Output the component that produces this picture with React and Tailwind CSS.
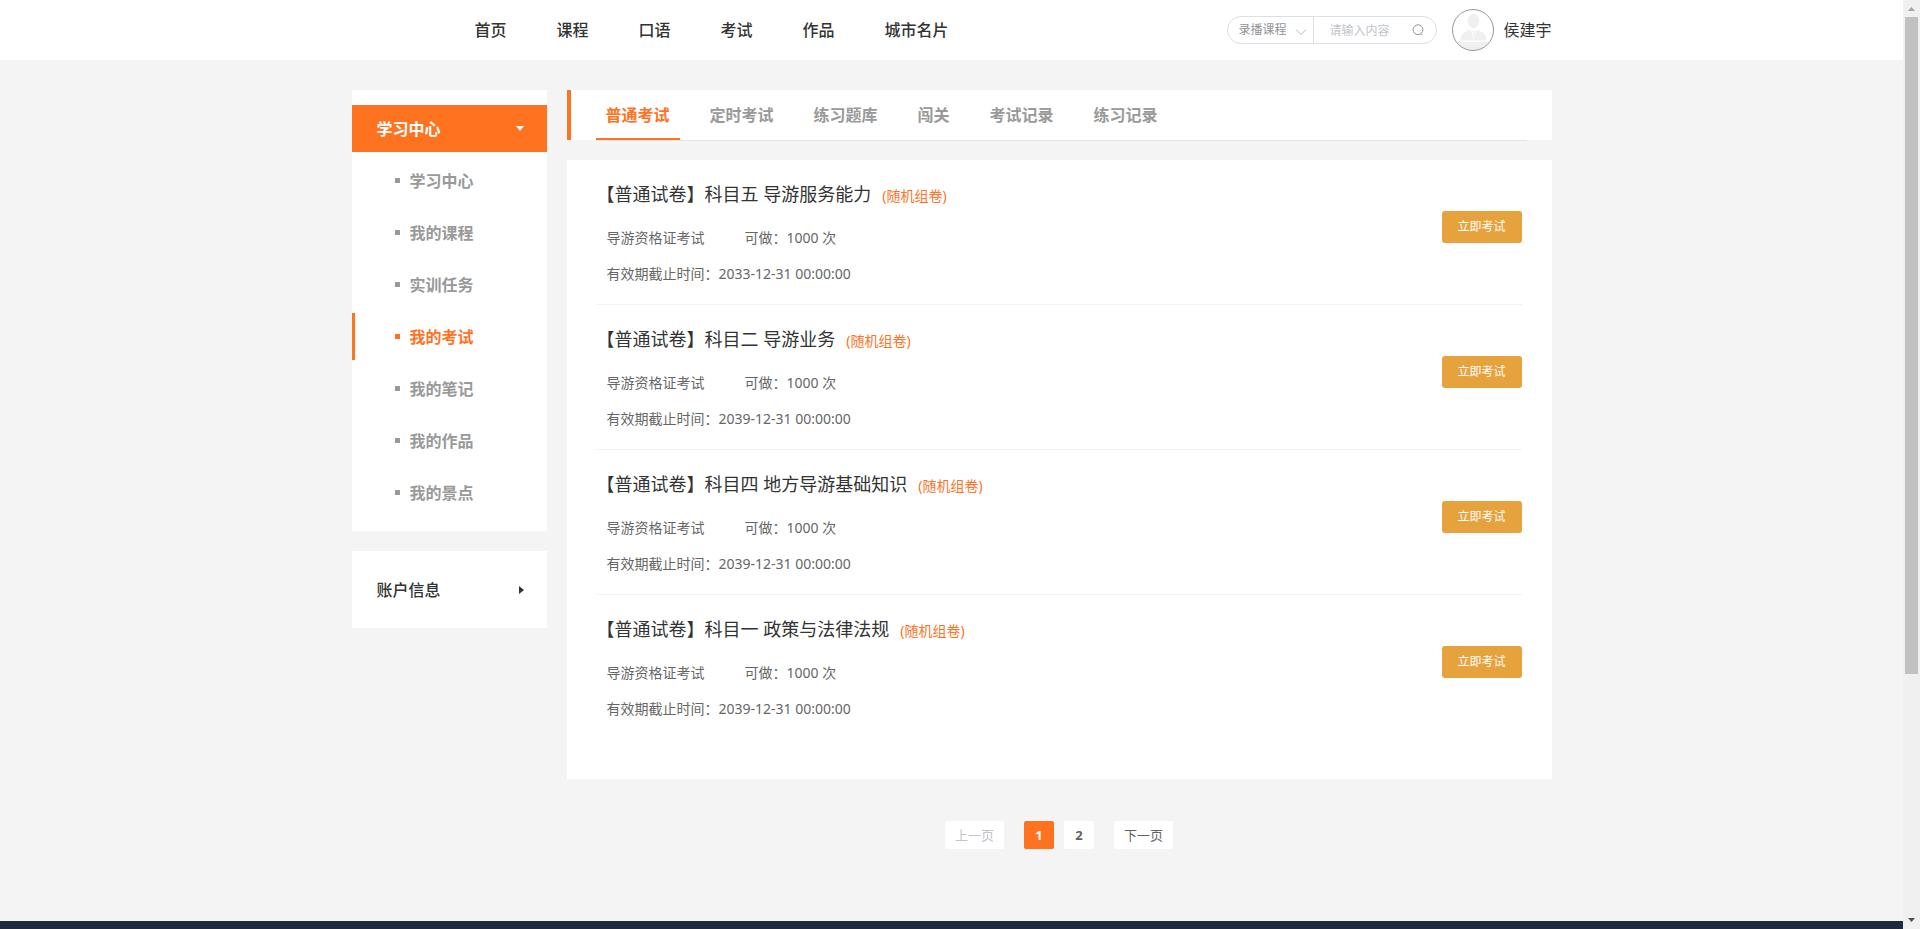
import React from 'react';

const navLinks = ['首页', '课程', '口语', '考试', '作品', '城市名片'];

const menuItems = ['学习中心', '我的课程', '实训任务', '我的考试', '我的笔记', '我的作品', '我的景点'];

const tabs = ['普通考试', '定时考试', '练习题库', '闯关', '考试记录', '练习记录'];

const exams = [
  { id: 1, title: '【普通试卷】科目五 导游服务能力', category: '导游资格证考试', times: 1000, deadline: '2033-12-31 00:00:00' },
  { id: 2, title: '【普通试卷】科目二 导游业务', category: '导游资格证考试', times: 1000, deadline: '2039-12-31 00:00:00' },
  { id: 3, title: '【普通试卷】科目四 地方导游基础知识', category: '导游资格证考试', times: 1000, deadline: '2039-12-31 00:00:00' },
  { id: 4, title: '【普通试卷】科目一 政策与法律法规', category: '导游资格证考试', times: 1000, deadline: '2039-12-31 00:00:00' }
];

const Header = () => (
  <header className="bg-white">
    <div className="max-w-[1200px] h-[60px] mx-auto flex items-center justify-between">
      <nav className="flex gap-[50px] pl-[123px] text-base font-medium text-[#333]">
        {navLinks.map((link) => (
          <a key={link} href="#">{link}</a>
        ))}
      </nav>

      <div className="flex items-center">
        {/* Search */}
        <form className="flex items-center w-[210px] h-7 border border-[#dcdfe6] rounded-full text-xs overflow-hidden">
          <div className="relative w-[86px] h-full border-r border-[#dcdfe6]">
            <select aria-label="课程类型" className="appearance-none w-full h-full pl-[10px] text-[#909399] bg-transparent outline-none">
              <option>录播课程</option>
            </select>
            <svg className="absolute right-[6px] top-[11px] w-3 h-2 pointer-events-none" viewBox="0 0 12 8" fill="none" stroke="#b4b8bf">
              <path d="M1 1.500l5 5 5-5" />
            </svg>
          </div>
          <input
            type="text"
            aria-label="搜索"
            placeholder="请输入内容"
            className="flex-1 min-w-0 h-full pl-[15px] outline-none placeholder:text-[#c0c4cc]"
          />
          <button type="submit" aria-label="搜索" className="mr-3">
            <svg className="w-3 h-3" viewBox="0 0 12 12" fill="none" stroke="#909399">
              <circle cx="6" cy="5.7" r="4.900" />
              <path d="M8.800 9.700l1.700 1.500" />
            </svg>
          </button>
        </form>

        {/* User */}
        <a href="#" className="flex items-center gap-[9px] ml-[15px] text-base text-[#333]">
          <svg className="w-[42px] h-[42px]" viewBox="0 0 42 42">
            <defs>
              <clipPath id="avatar">
                <circle cx="21" cy="21" r="20.5" />
              </clipPath>
            </defs>
            <circle cx="21" cy="21" r="20.5" fill="#fff" />
            <g clipPath="url(#avatar)" fill="#f0f0f0">
              <ellipse cx="21.5" cy="12" rx="5.7" ry="7.2" />
              <path d="M8.5 31.5c0-7 4-8.500 9.500-10.500l3.500 6 3.500-6c5.500 2 9.500 3.500 9.500 10.500z" />
              <path d="M20 21.500h3.500l-.7 2 1 4-2 3-2-3 1-4z" fill="#fff" />
              <path d="M20.300 22h2.700l-.7 1.500.8 4-1.400 2-1.400-2 .8-4z" />
              <rect y="33" width="42" height="9" />
            </g>
            <circle cx="21" cy="21" r="20.5" fill="none" stroke="#999" />
          </svg>
          侯建宇
        </a>
      </div>
    </div>
  </header>
);

const Sidebar = () => (
  <aside className="w-[195px] shrink-0 flex flex-col gap-5 text-base font-bold">
    <div className="bg-white py-[15px]">
      <button type="button" className="flex items-center justify-between w-full h-[47px] pl-[25px] pr-[23px] bg-[#ff721f] text-white font-bold">
        学习中心
        <svg className="w-2 h-[5px]" viewBox="0 0 8 5" fill="currentColor">
          <path d="M0 0h8l-4 5z" />
        </svg>
      </button>
      <ul className="flex flex-col gap-[5px] mt-[5px]">
        {menuItems.map((item) => (
          <li key={item}>
            <a
              href="#"
              className={
                item === '我的考试'
                  ? 'flex items-center gap-[10px] h-[47px] pl-10 border-l-3 border-[#ff721f] text-[#ff721f]'
                  : 'flex items-center gap-[10px] h-[47px] pl-10 border-l-3 border-transparent text-[#999]'
              }
            >
              <span className="w-[5px] h-[5px] bg-current"></span>
              {item}
            </a>
          </li>
        ))}
      </ul>
    </div>

    <div className="bg-white py-[15px]">
      <button type="button" className="flex items-center justify-between w-full h-[47px] pl-[25px] pr-[23px] text-[#333] font-medium">
        账户信息
        <svg className="w-[5px] h-2" viewBox="0 0 5 8" fill="currentColor">
          <path d="M0 0l5 4-5 4z" />
        </svg>
      </button>
    </div>
  </aside>
);

const ExamList = () => (
  <ul className="bg-white px-[30px] pb-[39px]">
    {exams.map((exam) => (
      <li key={exam.id} className="flex items-start justify-between border-b border-[#f2f2f2] last:border-transparent">
        <div className="pt-2 pb-3 text-sm text-[#666]">
          <div className="flex items-baseline gap-[11px] h-[52px]">
            <h3 className="text-lg leading-[52px] text-[#333]">{exam.title}</h3>
            <span className="text-[#ff721f]">(随机组卷)</span>
          </div>
          <div className="flex gap-10 pl-[10px] leading-9">
            <span>{exam.category}</span>
            <span>可做：{exam.times} 次</span>
          </div>
          <p className="pl-[10px] leading-9">有效期截止时间：{exam.deadline}</p>
        </div>
        <button type="button" className="w-20 h-8 mt-[51px] rounded-[3px] bg-[#e6a23c] text-white text-xs">
          立即考试
        </button>
      </li>
    ))}
  </ul>
);

const Pagination = () => (
  <div className="flex justify-center mt-[42px] text-[13px] leading-7 text-[#606266]">
    <button type="button" disabled className="h-7 px-[10px] mr-5 bg-white rounded-xs text-[#c0c4cc]">上一页</button>
    <button type="button" className="w-[30px] h-7 mr-[10px] bg-[#ff721f] rounded-xs text-white font-bold">1</button>
    <button type="button" className="w-[30px] h-7 mr-5 bg-white rounded-xs font-bold">2</button>
    <button type="button" className="h-7 px-[10px] bg-white rounded-xs">下一页</button>
  </div>
);

const ScrollBar = () => (
  <div className="flex flex-col items-center justify-between w-[17px] shrink-0 bg-[#f0f0f0]">
    <svg className="w-[17px] h-[17px]" viewBox="0 0 17 17" fill="#a3a3a3">
      <path d="M5 11h7l-3.500-4z" />
    </svg>
    <div className="w-[13px] flex-1 flex flex-col">
      <div className="basis-[73.4%] bg-[#c1c1c1]"></div>
    </div>
    <svg className="w-[17px] h-[17px]" viewBox="0 0 17 17" fill="#505050">
      <path d="M5 6h7l-3.500 4z" />
    </svg>
  </div>
);

const App = () => {
  return (
    <div className="flex min-h-screen bg-[#f4f4f4] font-['Noto_Sans','Noto_Sans_CJK_SC',sans-serif]">
      <div className="flex-1 flex flex-col">
        <Header />

        <div className="flex-1 w-full max-w-[1200px] mx-auto pt-[30px] flex items-start gap-5">
          <Sidebar />
          <main className="flex-1">
            {/* Tabs, the bottom rule hangs just under the white bar */}
            <div className="h-[50px] px-[25px] mb-5 bg-white border-l-4 border-[#ff721f]">
              <nav className="flex gap-5 h-[51px] border-b border-[#e4e4e4] text-base font-bold text-[#999]">
                {tabs.map((tab, index) => (
                  <a
                    key={tab}
                    href="#"
                    className={index === 0 ? 'px-[10px] leading-[50px] border-b-2 border-[#ff721f] text-[#ff721f]' : 'px-[10px] leading-[50px]'}
                  >
                    {tab}
                  </a>
                ))}
              </nav>
            </div>
            <ExamList />
            <Pagination />
          </main>
        </div>

        <footer className="h-2 bg-[#1f2a3c]"></footer>
      </div>
      <ScrollBar />
    </div>
  );
};

export default App;
